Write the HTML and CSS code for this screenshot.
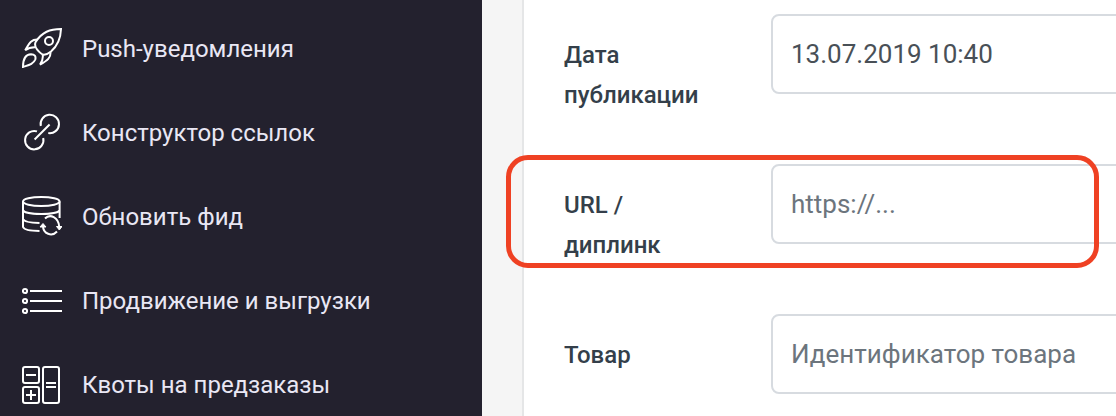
FILE: index.html
```html
<!DOCTYPE html>
<html lang="ru">
<head>
<meta charset="utf-8">
<title>Push-уведомления</title>
<link rel="stylesheet" href="styles.css">
</head>
<body>
<div class="app">
  <nav class="sidebar">
    <a class="nav-item">
      <svg class="icon" viewBox="0 0 40 40"><path d="M39 1C28 1 20 4 13.5 14.2Q12.2 18 15 21.3Q19 26.300 22 26.800Q25.300 26.500 29 23.500C36.500 17 38.700 10 39 1Z"/><circle cx="27" cy="13" r="4"/><path d="M15.300 11.500C9 11.500 7.500 15 3.200 22.200Q7.500 19 13.300 19.200M28.600 24.200C28.600 30 26 32 18 36.700Q21.500 32 20.700 26.500M1 39C1 32 2.500 26.500 9 26.300Q14.500 26.500 13.300 31.500C11.500 36 7 37 1 39Z"/></svg>
      <span>Push-уведомления</span>
    </a>
    <a class="nav-item">
      <svg class="icon" viewBox="0 0 40 40"><path d="M18.800 14A9.200 9.200 0 1 1 26.300 21.100M15 19.400A9.200 9.200 0 1 0 21.200 26M12.600 27.500L27.600 12.500"/></svg>
      <span>Конструктор ссылок</span>
    </a>
    <a class="nav-item">
      <svg class="icon" viewBox="0 0 40 40"><ellipse cx="19.300" cy="5.500" rx="18.300" ry="4.500"/><path d="M1 5.500V31C2 33.500 8 34.900 17.500 35M1 23C2 25.500 8 26.800 17.500 27M1 14C2 19.300 36.600 19.300 37.600 14M37.600 5.500V22M23 22.500C28 17.500 36.500 21 37.300 31M35 35.500C30 41 21 38 21 30"/><path class="solid" d="M34.500 30.500L40 30.500L37.300 34ZM18 31L24 31L21 27.500Z"/></svg>
      <span>Обновить фид</span>
    </a>
    <a class="nav-item">
      <svg class="icon" viewBox="0 0 40 40"><circle cx="3" cy="11" r="2.100"/><circle cx="3" cy="21" r="2.100"/><circle cx="3" cy="31" r="2.100"/><path d="M8 11H40M8 21H40M8 31H40"/></svg>
      <span>Продвижение и выгрузки</span>
    </a>
    <a class="nav-item">
      <svg class="icon" viewBox="0 0 40 40"><rect x="1" y="3" width="16" height="16" rx="2"/><rect x="1" y="23" width="16" height="16" rx="2"/><rect x="21" y="3" width="16" height="36" rx="2"/><path d="M4 11H14M4 31H14M9 26V36M24 19H34M24 23H34"/></svg>
      <span>Квоты на предзаказы</span>
    </a>
  </nav>
  <main class="content">
    <form class="panel">
      <div class="field">
        <label class="label" for="date">Дата публикации</label>
        <input class="input" id="date" type="text" value="13.07.2019 10:40">
      </div>
      <div class="field">
        <label class="label" for="url">URL /<br>диплинк</label>
        <input class="input" id="url" type="text" placeholder="https://...">
      </div>
      <div class="field">
        <label class="label" for="product">Товар</label>
        <input class="input" id="product" type="text" placeholder="Идентификатор товара">
      </div>
    </form>
  </main>
  <div class="highlight"></div>
</div>
</body>
</html>
```
FILE: styles.css
```css
* { box-sizing: border-box; }

body {
  margin: 0;
  overflow: hidden;
  font-family: Roboto, "Liberation Sans", sans-serif;
}

.app {
  position: relative;
  display: flex;
  width: 1116px;
  height: 416px;
  overflow: hidden;
}

.sidebar {
  flex: 0 0 482px;
  height: 426px;
  padding: 6px 22px 0;
  background: #23212e;
}

.nav-item {
  display: flex;
  align-items: center;
  gap: 20px;
  height: 84px;
  color: #e9e7f4;
  font-size: 24px;
  white-space: nowrap;
}

.nav-item span { padding-top: 2px; }

.icon {
  flex: none;
  width: 40px;
  height: 40px;
  fill: none;
  stroke: #fff;
  stroke-width: 2;
}

.icon .solid { fill: #fff; stroke-width: 1; }

.content {
  flex: 1;
  padding-left: 40px;
  background: #f5f5f5;
}

.panel {
  display: flex;
  flex-direction: column;
  gap: 70px;
  width: 620px;
  height: 420px;
  padding: 14px 0 0 40px;
  border-left: 2px solid #e5e6e7;
  background: #fff;
}

.field {
  display: flex;
  flex: none;
  height: 80px;
}

.label {
  flex: 0 0 207px;
  padding: 21px 60px 0 0;
  color: #343f4a;
  font-size: 24px;
  font-weight: 500;
  line-height: 40px;
}

.input {
  flex: 1;
  min-width: 0;
  height: 80px;
  padding: 0 18px;
  border: 2px solid #d7dbe0;
  border-radius: 8px;
  background: #fff;
  color: #495057;
  font: 400 26px Roboto, "Liberation Sans", sans-serif;
}

.input::placeholder { color: #6c757d; opacity: 1; }

.highlight {
  position: absolute;
  top: 155px;
  left: 506px;
  width: 593px;
  height: 113px;
  border: 5px solid #ef4123;
  border-radius: 22px;
  pointer-events: none;
}
```
